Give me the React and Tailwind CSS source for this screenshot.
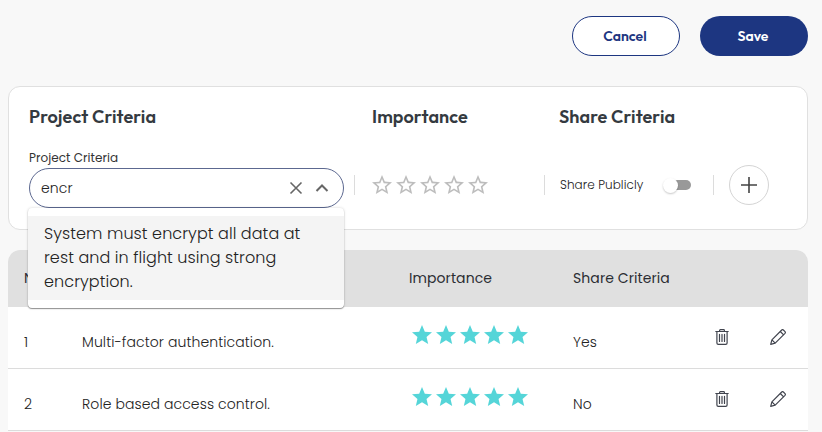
const STAR = 'M12 17.27 18.18 21l-1.64-7.03L22 9.24l-7.19-.61L12 2 9.19 8.63 2 9.24l5.46 4.73L5.82 21z';
const STAR_OUTLINE =
  'm22 9.24-7.19-.62L12 2 9.19 8.63 2 9.24l5.46 4.73L5.82 21 12 17.27 18.18 21l-1.63-7.03L22 9.24zM12 15.4l-3.76 2.27 1-4.28-3.32-2.88 4.38-.38L12 6.1l1.71 4.04 4.38.38-3.32 2.88 1 4.28L12 15.4z';

function Stars({ filled }) {
  return (
    <div className={filled ? 'flex text-[#55d5d8]' : 'flex text-[#bdbdbd]'}>
      {[1, 2, 3, 4, 5].map((n) => (
        <svg key={n} className="size-6" viewBox="0 0 24 24" fill="currentColor">
          <path d={filled ? STAR : STAR_OUTLINE} />
        </svg>
      ))}
    </div>
  );
}

function Trash() {
  return (
    <svg className="h-4 w-[14px]" viewBox="0 0 14 16" fill="none" stroke="#41444e" strokeWidth="1.2" strokeLinecap="round" strokeLinejoin="round">
      <path d="M.8 2.500h12.400M1.900 2.700v11.200c0 .9.5 1.400 1.400 1.400h7.400c.9 0 1.400-.5 1.400-1.400V2.700M4.600 2.400V1.500c0-.5.3-.8.8-.8h3.200c.5 0 .8.3.8.8v.9M4.500 5.400v7M7 5.400v7M9.500 5.400v7" />
    </svg>
  );
}

function Pencil() {
  return (
    <svg className="size-4" viewBox="0 0 16 16" fill="none" stroke="#41444e" strokeWidth="1.2" strokeLinecap="round" strokeLinejoin="round">
      <path d="M.7 15.300l1.200-4.500L11.700 1c.6-.5 1.200-.5 1.700 0l1.600 1.600c.5.5.5 1.100 0 1.700l-9.800 9.800zM1.900 10.800l3.300 3.300M10.300 2.500l3.300 3.300" />
    </svg>
  );
}

const ROWS = [
  { n: '1', text: 'Multi-factor authentication.', share: 'Yes' },
  { n: '2', text: 'Role based access control.', share: 'No' },
];

function Divider() {
  return <div className="h-5 w-px shrink-0 bg-[#dcdcdc]" />;
}

export default function App() {
  return (
    <div className="h-[432px] w-[822px] overflow-hidden bg-[#f8f8f8] pr-[14px] pl-2 pt-4 text-[#222] [font-family:Poppins,Inter,sans-serif]">
      <div className="flex justify-end gap-5 [font-family:Outfit,Lato,sans-serif] text-[14px] font-semibold">
        <button className="h-10 w-[108px] rounded-full border border-[#1d3681] bg-white pr-[2px] text-[#1d3681]">Cancel</button>
        <button className="h-10 w-[108px] rounded-full bg-[#1d3681] pr-[2px] text-white">Save</button>
      </div>

      <section className="mt-[30px] h-36 rounded-xl border border-[#e0e0e0] bg-white px-5 pt-[17px]">
        <div className="flex h-6 items-center whitespace-nowrap text-[18px] font-semibold tracking-[0.1px] text-[#343a40] [font-family:Outfit,Lato,sans-serif]">
          <h2 className="w-[343px]">Project Criteria</h2>
          <h2 className="w-[187px]">Importance</h2>
          <h2>Share Criteria</h2>
        </div>
        <div className="mt-[22px] flex">
          <div className="w-[315px]">
            <div className="h-[18px] text-[12px] leading-[16px] tracking-[0.04px] text-[#333]">
              <span>Project Criteria</span>
            </div>
            <div className="relative flex h-10 items-center rounded-full border border-[#5c6890] pr-3 pl-[11px]">
              <span className="flex-1 text-[14px] font-light tracking-[0.1px]">encr</span>
              <svg className="size-[18px]" viewBox="0 0 18 18" fill="none" stroke="#666" strokeWidth="1.6">
                <path d="M3.500 3.500l11 11M14.500 3.500l-11 11" />
              </svg>
              <svg className="ml-2 size-[18px]" viewBox="0 0 18 18" fill="none" stroke="#666" strokeWidth="2">
                <path d="M3.500 12L9 6.500l5.500 5.500" />
              </svg>
              <div className="absolute top-[39px] -left-[2px] z-10 h-[100px] w-[316px] rounded-[4px] bg-white py-2 shadow-[0_1px_1px_rgba(0,0,0,0.4),0_0_3px_rgba(0,0,0,0.16)]">
                <p className="h-[84px] bg-[#f4f4f4] px-4 pt-[6px] text-[16px] leading-6 font-light tracking-[0.08px] whitespace-nowrap">
                  <span>System must encrypt all data at</span>
                  <br />
                  <span>rest and in flight using strong</span>
                  <br />
                  <span>encryption.</span>
                </p>
              </div>
            </div>
          </div>
          <div className="mt-[15px] ml-[10px] flex h-10 items-center">
            <Divider />
            <div className="ml-[15px]">
              <Stars />
            </div>
            <div className="ml-[54px]">
              <Divider />
            </div>
            <span className="ml-[15px] w-[103px] whitespace-nowrap text-[12px] font-light tracking-[0.08px]">Share Publicly</span>
            <div className="flex h-4 w-[29px] items-center">
              <span className="z-10 size-[15px] rounded-full bg-white shadow-[0_1px_2px_rgba(0,0,0,0.22)]" />
              <span className="-ml-[8px] h-[10px] w-[21px] rounded-full bg-[#999]" />
            </div>
            <div className="ml-[21px]">
              <Divider />
            </div>
            <button className="ml-[15px] flex size-10 items-center justify-center rounded-full border border-[#d4d4d4]">
              <svg className="size-4" viewBox="0 0 16 16" stroke="#444" strokeWidth="1.6">
                <path d="M8 0v16M0 8h16" />
              </svg>
            </button>
          </div>
        </div>
      </section>

      <section className="mt-5 overflow-hidden rounded-t-xl bg-white text-[14px]">
        <div className="flex h-[57px] items-center bg-[#e0e0e0] pl-4 tracking-[0.08px] text-[#2b2d33]">
          <span className="w-[385px]">No</span>
          <span className="w-[164px]">Importance</span>
          <span>Share Criteria</span>
        </div>
        {ROWS.map((r) => (
          <div key={r.n} className="flex h-[62px] items-center border-b border-[#dcdcdc] pt-[9px] pl-4 font-light tracking-[0.09px]">
            <span className="w-[58px]">{r.n}</span>
            <span className="w-[320px] whitespace-nowrap">{r.text}</span>
            <div className="-mt-[15px] w-[171px] pl-2">
              <Stars filled />
            </div>
            <span className="w-[142px]">{r.share}</span>
            <div className="-mt-[11px] w-[55px]">
              <Trash />
            </div>
            <div className="-mt-[11px]">
              <Pencil />
            </div>
          </div>
        ))}
      </section>
    </div>
  );
}
